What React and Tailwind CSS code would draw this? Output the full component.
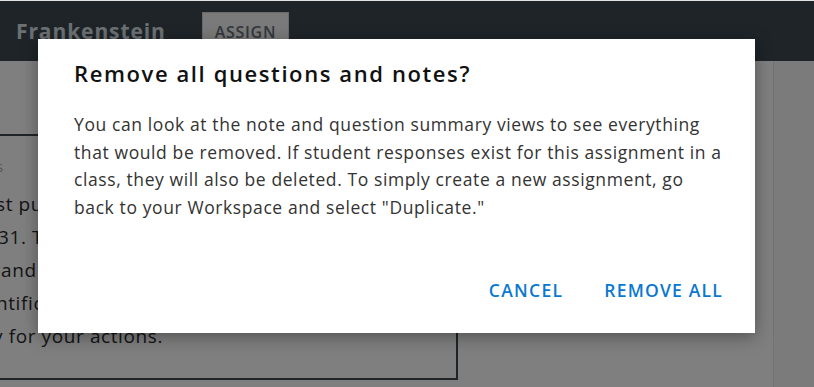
import React from 'react';

// Confirm dialog shown over the assignment editor
export default function App() {
  return (
    <div className="relative h-[387px] w-[814px] overflow-hidden bg-white font-['Open_Sans',sans-serif]">
      <div className="h-px bg-[#e2e2e2]" />
      {/* Header */}
      <div className="flex h-[60px] items-start bg-[#3c4851] pl-4">
        <div className="mt-[15px] text-[21px] font-bold leading-[30px] tracking-[0.9px] text-[#d8e0e6]">Frankenstein</div>
        <button className="ml-[36px] mt-[11px] h-[40px] border border-[#d4d4d4] bg-[#f4f4f4] px-[12px] text-[16px] font-semibold leading-[26px] tracking-[0.7px] text-[#66707a]">
          ASSIGN
        </button>
      </div>

      {/* Page body */}
      <div className="flex h-[326px]">
        <div className="flex-1">
          <div className="-ml-[40px] mt-[73px] h-[246px] w-[498px] border-2 border-[#3c4851] pl-[34px] text-[#2a2a2a]">
            <div className="pt-[18px] text-[15px] leading-[24px] tracking-[0.5px] text-[#b0b0b0]">s</div>
            <div className="mt-[10px] text-[19px] leading-[33px] tracking-[0.6px]">
              <div>st published in 1818</div>
              <div className="pl-[2px]">31. The story follows</div>
              <div className="pl-[5px]">and his experiment</div>
              <div>ntific knowledge and</div>
              <div className="-ml-[3px]">y for your actions.</div>
            </div>
          </div>
        </div>
        <div className="w-[41px] border-l border-[#e4e4e4] bg-[#f4f6f4]" />
      </div>

      {/* Overlay + dialog */}
      <div className="absolute inset-x-0 bottom-0 top-px bg-black/50">
        <div className="ml-[38px] mt-[38px] flex h-[294px] w-[717px] flex-col bg-white pl-[36px] pr-[26px] shadow-[0_4px_16px_rgba(0,0,0,0.35)]">
          <h2 className="pt-[18px] text-[22px] font-semibold leading-[32px] tracking-[1.6px] text-[#111]">
            Remove all questions and notes?
          </h2>
          <p className="mt-[22px] text-[17.5px] leading-[27.5px] tracking-[0.6px] text-[#333]">
            You can look at the note and question summary views to see everything that would be removed. If student
            responses exist for this assignment in a class, they will also be deleted. To simply create a new
            assignment, go back to your Workspace and select "Duplicate."
          </p>
          <div className="mr-[6px] mt-auto mb-[30px] flex justify-end gap-[41px]">
            <button className="text-[17.5px] font-semibold tracking-[1.3px] text-[#0a78d0]">CANCEL</button>
            <button className="text-[17.5px] font-semibold tracking-[1.2px] text-[#0a78d0]">REMOVE ALL</button>
          </div>
        </div>
      </div>
    </div>
  );
}
